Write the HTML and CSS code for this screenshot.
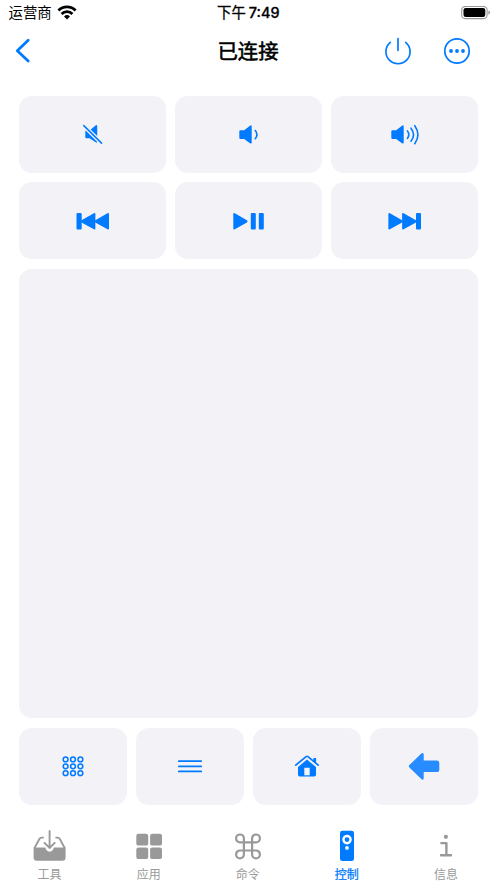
FILE: index.html
```html
<!DOCTYPE html>
<html lang="zh-CN">
<head>
<meta charset="utf-8">
<meta name="viewport" content="width=device-width, initial-scale=1">
<title>已连接</title>
<link rel="stylesheet" href="styles.css">
</head>
<body>
<header class="status">
  <div class="carrier"><span>运营商</span>
    <svg width="20" height="16" viewBox="0 0 20 16"><g fill="none" stroke="#000" stroke-width="2.8"><path d="M1.4 5.4a12.2 12.2 0 0 1 17.2 0"/><path d="M4.6 8.9a7.6 7.6 0 0 1 10.8 0"/></g><path d="M10 14.4L7 11.4a4.3 4.3 0 0 1 6 0z"/></svg>
  </div>
  <div class="time">下午 <b>7:49</b></div>
  <svg class="battery" width="30" height="14" viewBox="0 0 30 14"><rect x=".7" y=".4" width="25.4" height="12.2" rx="3.7" fill="none" stroke="#999" stroke-width="1.1"/><rect x="2.5" y="2" width="21.8" height="9" rx="2.2"/><path d="M27.5 4.4v4.4a2.4 2.4 0 0 0 0-4.4z" fill="#888"/></svg>
</header>
<nav class="navbar">
  <svg class="back" width="16" height="26" viewBox="0 0 16 26"><path d="M13.2 2.3L2.3 12.7l10.9 10.4" fill="none" stroke="currentColor" stroke-width="2.8" stroke-linecap="round" stroke-linejoin="round"/></svg>
  <h1>已连接</h1>
  <div class="actions">
    <svg width="28" height="28" viewBox="-14 -14 28 28"><path d="M-7.7 -8.7a12.1 12.1 0 1 0 15.4 0M0 -12.5V-.7" fill="none" stroke="currentColor" stroke-width="1.7" stroke-linecap="round"/></svg>
    <svg width="28" height="28" viewBox="-14 -14 28 28"><circle r="12.2" fill="none" stroke="currentColor" stroke-width="1.7"/><g fill="currentColor"><circle cx="-6" r="1.9"/><circle r="1.9"/><circle cx="6" r="1.9"/></g></svg>
  </div>
</nav>
<main class="remote">
  <section class="row row-3">
    <button class="key" aria-label="静音"><svg viewBox="-24.3 -24.3 48 48"><path fill="currentColor" d="M-6.4 -3.8h3.7l5.9-5.1q1.7-1 1.7.8V7.6q0 1.3-1.5.3L-2.7 4h-3.2q-1.1 0-1.1-1.1v-5.6q0-1.1.6-1.1z"/><path d="M-9 -9L9.3 9" stroke="#f2f2f7" stroke-width="4.2"/><path d="M-8.5 -8.7L9.2 8.8" stroke="currentColor" stroke-width="1.5" stroke-linecap="round"/></svg></button>
    <button class="key" aria-label="音量减"><svg viewBox="-24.6 -24.4 48 48"><path fill="currentColor" d="M-8 -4.2h3.6l5.8-4.5q1.7-1 1.7.8V8q0 1.8-1.7.8L-4.4 4.6H-8q-1.3 0-1.3-1.3v-6.2q0-1.3 1.3-1.3z"/><path d="M6.7 -3.9q3.2 4.2 0 8.2" fill="none" stroke="currentColor" stroke-width="1.6" stroke-linecap="round"/></svg></button>
    <button class="key" aria-label="音量加"><svg viewBox="-23.8 -24.4 48 48"><path fill="currentColor" d="M-12.2 -4.2h3.6l5.8-4.5q1.7-1 1.7.8V8q0 1.8-1.7.8l-5.8-4.2h-3.6q-1.3 0-1.3-1.3v-6.2q0-1.3 1.3-1.3z"/><path d="M2.6 -3.5q2.8 3.8 0 7.5M6.2 -6.2q5 6.5 0 13M10 -8.7q6.2 9 0 18" fill="none" stroke="currentColor" stroke-width="1.6" stroke-linecap="round"/></svg></button>
  </section>
  <section class="row row-3">
    <button class="key" aria-label="上一首"><svg viewBox="-24.5 -24 48 48"><g fill="currentColor"><rect x="-16" y="-8" width="5.2" height="16.5" rx="1.1"/><path d="M1.4 -7.8q1.5-.8 1.5 1V7.3q0 1.8-1.5 1L-11 1.4q-1.4-1.1 0-2.2z"/><path d="M15 -7.8q1.5-.8 1.5 1V7.3q0 1.8-1.5 1L2.8 1.4q-1.4-1.1 0-2.2z"/></g></svg></button>
    <button class="key" aria-label="播放暂停"><svg viewBox="-24.5 -24 48 48"><g fill="currentColor"><path d="M-13.7 -7.8q-1.5-.8-1.5 1V7.3q0 1.8 1.5 1L-1.6 1.4q1.4-1.1 0-2.2z"/><rect x="2.3" y="-8" width="5" height="16.5" rx="1.1"/><rect x="10.3" y="-8" width="5" height="16.5" rx="1.1"/></g></svg></button>
    <button class="key" aria-label="下一首"><svg viewBox="-23.8 -24 48 48"><g fill="currentColor"><path d="M-14.9 -7.8q-1.5-.8-1.5 1V7.3q0 1.8 1.5 1L-2.7 1.4q1.4-1.1 0-2.2z"/><path d="M-1.2 -7.8q-1.5-.8-1.5 1V7.3q0 1.8 1.5 1L11.2 1.4q1.4-1.1 0-2.2z"/><rect x="11.2" y="-8" width="5" height="16.5" rx="1.1"/></g></svg></button>
  </section>
  <section class="touchpad" aria-label="触控板"></section>
  <section class="row row-4">
    <button class="key" aria-label="主屏幕"><svg viewBox="-24 -24.3 48 48"><g fill="none" stroke="currentColor" stroke-width="1.5"><circle cx="-7.4" cy="-6.9" r="2.4"/><circle cy="-6.9" r="2.4"/><circle cx="7.4" cy="-6.9" r="2.4"/><circle cx="-7.4" cy="0" r="2.4"/><circle cy="0" r="2.4"/><circle cx="7.4" cy="0" r="2.4"/><circle cx="-7.4" cy="6.9" r="2.4"/><circle cy="6.9" r="2.4"/><circle cx="7.4" cy="6.9" r="2.4"/></g></svg></button>
    <button class="key" aria-label="菜单"><svg viewBox="-24 -24.3 48 48"><path d="M-11.2 -5.1H11.2M-11.2 0H11.2M-11.2 5.1H11.2" stroke="currentColor" stroke-width="1.7" stroke-linecap="round"/></svg></button>
    <button class="key" aria-label="主页"><svg viewBox="-24 -24 48 48"><path d="M-11.2 -.9L-.9 -9.4q.9-.7 1.8 0L11.2 -.9" fill="none" stroke="currentColor" stroke-width="1.7" stroke-linecap="round"/><path fill="currentColor" d="M6.4 -8h2.7v5.3L6.4 -5zM0 -6.4L9 1V8.8q0 1.7-1.7 1.7H2.7V1.8h-5.4v8.7h-4.6Q-9 10.5-9 8.8V1z"/><path d="M-3 9.9h6" stroke="currentColor" stroke-width="1.2"/></svg></button>
    <button class="key return" aria-label="返回"><svg viewBox="-24.4 -24.3 48 48"><path fill="currentColor" d="M-15 -1.2L-3.1 -12.7q2.4-1.7 2.4 1v5.9h12.9q2.7 0 2.7 2.7v6.2q0 2.7-2.7 2.7H-.7v5.9q0 2.7-2.4 1L-15 1.2q-1.2-1.2 0-2.4z"/></svg></button>
  </section>
</main>
<nav class="tabs">
  <a class="tab"><svg viewBox="-17.6 -17 36 34"><path d="M-5.8 -8.4H-8q-1.4 0-2.1 1.2L-15.2 2.2M5.8 -8.4H8q1.4 0 2.1 1.2L15.2 2.2" fill="none" stroke="currentColor" stroke-width="1.8"/><path fill="currentColor" d="M-16 1.6H-4.2q.7 4.1 4.2 4.1t4.2-4.1H16v10q0 3.2-3.2 3.2h-25.6q-3.2 0-3.2-3.2z"/><path d="M0 -15V1.6M-5.1 -3.2L0 1.9 5.1 -3.2" fill="none" stroke="currentColor" stroke-width="1.9" stroke-linecap="round"/></svg><span>工具</span></a>
  <a class="tab"><svg viewBox="-18 -17 36 34"><g fill="currentColor"><rect x="-12.7" y="-12.3" width="11.9" height="11.9" rx="2.2"/><rect x="1.1" y="-12.3" width="11.9" height="11.9" rx="2.2"/><rect x="-12.7" y="1.4" width="11.9" height="11.7" rx="2.2"/><rect x="1.1" y="1.4" width="11.9" height="11.7" rx="2.2"/></g></svg><span>应用</span></a>
  <a class="tab"><svg viewBox="-18 -17 36 34"><path d="M-4.1 -3.7H-8A3.9 3.9 0 1 1-4.1 -7.6V8.4A3.9 3.9 0 1 1-8 4.5H8A3.9 3.9 0 1 1 4.1 8.4V-7.6A3.9 3.9 0 1 1 8 -3.7z" fill="none" stroke="currentColor" stroke-width="2.2"/></svg><span>命令</span></a>
  <a class="tab active"><svg viewBox="-18 -17 36 34"><rect x="-7" y="-15.2" width="14" height="30.3" rx="2.4" fill="currentColor"/><circle cy="-6.4" r="3.6" fill="none" stroke="#fff" stroke-width="2.4"/><circle cy="1.9" r="1.9" fill="#fff"/></svg><span>控制</span></a>
  <a class="tab"><svg viewBox="-18 -17 36 34"><circle cx="-.1" cy="-9.2" r="2.1" fill="currentColor"/><path d="M-4.6 -2.9H.4V9.3M-5 9.3H5" fill="none" stroke="currentColor" stroke-width="2.4" stroke-linecap="round" stroke-linejoin="round"/></svg><span>信息</span></a>
</nav>
</body>
</html>
```

FILE: styles.css
```css
* { box-sizing: border-box; }
body {
  margin: 0;
  height: 883px;
  display: flex;
  flex-direction: column;
  overflow: hidden;
  background: #fff;
  color: #000;
  font-family: Inter, "Noto Sans CJK SC", sans-serif;
}
svg { display: block; flex: none; }
.status, .navbar, .remote, .tabs { flex-shrink: 0; }
.status {
  display: grid;
  grid-template-columns: 1fr auto 1fr;
  align-items: center;
  height: 25px;
  padding: 0 6px 0 8.5px;
  font-size: 14.4px;
  line-height: 24px;
}
.carrier { display: flex; align-items: center; gap: 5px; }
.time { margin-left: -3px; font-weight: 400; -webkit-text-stroke: .3px #000; }
.time b { font-weight: 500; margin-left: -1px; }
.battery { justify-self: end; }
.navbar {
  display: grid;
  grid-template-columns: 1fr auto 1fr;
  align-items: center;
  height: 52px;
  padding: 0 26px 0 15px;
  color: #007aff;
}
.navbar h1 {
  margin: 2px 0 0 10px;
  color: #000;
  font-size: 20.4px;
  line-height: 30px;
  font-weight: 400;
  -webkit-text-stroke: .55px #000;
}
.actions { display: flex; justify-content: flex-end; gap: 31.5px; }
.remote {
  display: flex;
  flex-direction: column;
  gap: 9.6px;
  height: 727.8px;
  padding: 19px 19.2px 0;
}
.row { display: grid; gap: 9.6px; height: 76.8px; }
.row-3 { grid-template-columns: repeat(3, 1fr); }
.row-4 { grid-template-columns: repeat(4, 1fr); }
.key {
  display: flex;
  align-items: center;
  justify-content: center;
  min-width: 0;
  padding: 0;
  border: 0;
  border-radius: 13px;
  background: #f2f2f7;
  color: #007aff;
}
.key svg { width: 48px; height: 48px; }
.return { color: #268cff; }
.touchpad { flex: 1; border-radius: 13px; background: #f2f2f7; }
.tabs {
  display: grid;
  grid-template-columns: repeat(5, 1fr);
  padding: 24px 1.5px 0 0;
}
.tab {
  display: flex;
  flex-direction: column;
  align-items: center;
  color: #999;
  font-size: 12px;
  line-height: 18px;
}
.tab svg { width: 36px; height: 34px; }
.tab span { margin-top: 3.2px; }
.tab.active { color: #007aff; }
.tab.active span { -webkit-text-stroke: .25px currentColor; }
```
